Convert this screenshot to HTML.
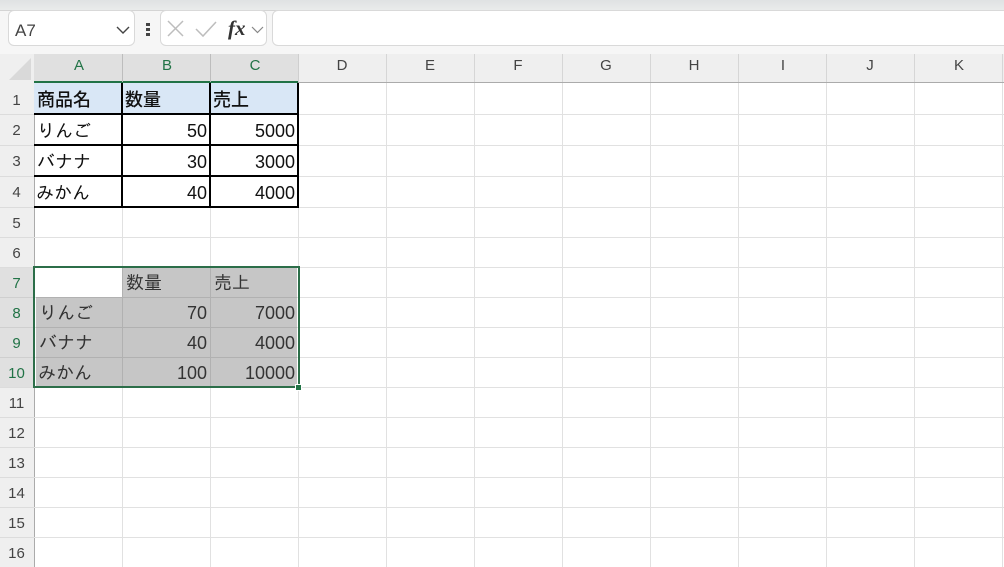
<!DOCTYPE html>
<html lang="ja">
<head>
<meta charset="utf-8">
<style>
html,body{margin:0;padding:0;width:1004px;height:567px;overflow:hidden;background:#fff}
body{position:relative;font-family:"Liberation Sans","Noto Sans CJK JP",sans-serif}
.a{position:absolute}
.box{position:absolute;box-sizing:border-box;background:#fff;border:1px solid #d9d9d9;border-radius:6px}
.ch,.rh{position:absolute;color:#444;font-size:15px;text-align:center}
.ch{top:56px;height:20px;line-height:20px;width:88px}
.rh{left:0;width:33px;height:20px;line-height:20px;font-size:15px}
.g{color:#217346}
.t{position:absolute;font-size:18px;color:#111;height:24px;line-height:24px;white-space:nowrap;font-family:"Liberation Sans","IPAGothic","Noto Sans CJK JP",sans-serif}
.b{font-family:"Liberation Sans","Noto Sans CJK JP",sans-serif;font-weight:500}
.r{text-align:right}
.s{color:#333}
.k{background:#000}
</style>
</head>
<body>
<div class="a" style="left:0;top:0;width:1004px;height:54px;background:#f6f6f6"></div>
<div class="a" style="left:0;top:0;width:1004px;height:10px;background:linear-gradient(#dfe2e3,#e9ebeb)"></div>
<div class="a" style="left:0;top:10px;width:1004px;height:1px;background:#d4d4d4"></div>

<div class="box" style="left:8px;top:10px;width:127px;height:36px"></div>
<div class="a" style="left:15px;top:20px;font-size:17px;line-height:22px;color:#444">A7</div>
<svg class="a" style="left:115px;top:25px" width="16" height="10"><path d="M2 2 L8 8 L14 2" fill="none" stroke="#444" stroke-width="1.4"/></svg>
<div class="a" style="left:146px;top:23px;width:4px;height:3px;background:#444"></div>
<div class="a" style="left:146px;top:28px;width:4px;height:3px;background:#444"></div>
<div class="a" style="left:146px;top:33px;width:4px;height:3px;background:#444"></div>

<div class="box" style="left:160px;top:10px;width:107px;height:36px"></div>
<svg class="a" style="left:166px;top:20px" width="22" height="18"><path d="M2 1 L17 16 M17 1 L2 16" fill="none" stroke="#bdbdbd" stroke-width="1.5"/></svg>
<svg class="a" style="left:194px;top:20px" width="24" height="18"><path d="M2 9 L9 16 L22 2" fill="none" stroke="#bdbdbd" stroke-width="1.5"/></svg>
<div class="a" style="left:228px;top:16px;font-family:'Liberation Serif',serif;font-style:italic;font-weight:bold;font-size:21px;line-height:24px;color:#333">fx</div>
<svg class="a" style="left:250px;top:25px" width="16" height="10"><path d="M2 2 L7.5 7.5 L13 2" fill="none" stroke="#888" stroke-width="1.2"/></svg>

<div class="box" style="left:272px;top:10px;width:740px;height:36px"></div>

<div class="a" style="left:0;top:54px;width:1004px;height:29px;background:#efefef"></div>
<div class="a" style="left:0;top:83px;width:34px;height:484px;background:#efefef"></div>
<div class="a" style="left:34px;top:54px;width:264px;height:28px;background:#e0e0e0"></div>
<svg class="a" style="left:8px;top:57px" width="24" height="24"><path d="M23 1 V23 H1 Z" fill="#d9d9d9"/></svg>

<div class="a" style="left:34px;top:82px;width:970px;height:1px;background:#ababab"></div>
<div class="a" style="left:34px;top:81px;width:264px;height:2px;background:#217346"></div>
<div class="a" style="left:34px;top:83px;width:1px;height:484px;background:#ababab"></div>

<!-- header column separators -->
<div class="a" style="left:122px;top:54px;width:1px;height:28px;background:#bdbdbd"></div>
<div class="a" style="left:210px;top:54px;width:1px;height:28px;background:#bdbdbd"></div>
<div class="a" style="left:298px;top:54px;width:1px;height:28px;background:#cfcfcf"></div>
<div class="a" style="left:386px;top:54px;width:1px;height:28px;background:#d6d6d6"></div>
<div class="a" style="left:474px;top:54px;width:1px;height:28px;background:#d6d6d6"></div>
<div class="a" style="left:562px;top:54px;width:1px;height:28px;background:#d6d6d6"></div>
<div class="a" style="left:650px;top:54px;width:1px;height:28px;background:#d6d6d6"></div>
<div class="a" style="left:738px;top:54px;width:1px;height:28px;background:#d6d6d6"></div>
<div class="a" style="left:826px;top:54px;width:1px;height:28px;background:#d6d6d6"></div>
<div class="a" style="left:914px;top:54px;width:1px;height:28px;background:#d6d6d6"></div>
<div class="a" style="left:1002px;top:54px;width:1px;height:28px;background:#d6d6d6"></div>

<!-- grid vertical -->
<div class="a" style="left:122px;top:83px;width:1px;height:484px;background:#e1e1e1"></div>
<div class="a" style="left:210px;top:83px;width:1px;height:484px;background:#e1e1e1"></div>
<div class="a" style="left:298px;top:83px;width:1px;height:484px;background:#e1e1e1"></div>
<div class="a" style="left:386px;top:83px;width:1px;height:484px;background:#e1e1e1"></div>
<div class="a" style="left:474px;top:83px;width:1px;height:484px;background:#e1e1e1"></div>
<div class="a" style="left:562px;top:83px;width:1px;height:484px;background:#e1e1e1"></div>
<div class="a" style="left:650px;top:83px;width:1px;height:484px;background:#e1e1e1"></div>
<div class="a" style="left:738px;top:83px;width:1px;height:484px;background:#e1e1e1"></div>
<div class="a" style="left:826px;top:83px;width:1px;height:484px;background:#e1e1e1"></div>
<div class="a" style="left:914px;top:83px;width:1px;height:484px;background:#e1e1e1"></div>
<div class="a" style="left:1002px;top:83px;width:1px;height:484px;background:#e1e1e1"></div>

<!-- grid horizontal -->
<div class="a" style="left:34px;top:114px;width:970px;height:1px;background:#e1e1e1"></div>
<div class="a" style="left:34px;top:145px;width:970px;height:1px;background:#e1e1e1"></div>
<div class="a" style="left:34px;top:176px;width:970px;height:1px;background:#e1e1e1"></div>
<div class="a" style="left:34px;top:207px;width:970px;height:1px;background:#e1e1e1"></div>
<div class="a" style="left:34px;top:237px;width:970px;height:1px;background:#e1e1e1"></div>
<div class="a" style="left:34px;top:267px;width:970px;height:1px;background:#e1e1e1"></div>
<div class="a" style="left:34px;top:297px;width:970px;height:1px;background:#e1e1e1"></div>
<div class="a" style="left:34px;top:327px;width:970px;height:1px;background:#e1e1e1"></div>
<div class="a" style="left:34px;top:357px;width:970px;height:1px;background:#e1e1e1"></div>
<div class="a" style="left:34px;top:387px;width:970px;height:1px;background:#e1e1e1"></div>
<div class="a" style="left:34px;top:417px;width:970px;height:1px;background:#e1e1e1"></div>
<div class="a" style="left:34px;top:447px;width:970px;height:1px;background:#e1e1e1"></div>
<div class="a" style="left:34px;top:477px;width:970px;height:1px;background:#e1e1e1"></div>
<div class="a" style="left:34px;top:507px;width:970px;height:1px;background:#e1e1e1"></div>
<div class="a" style="left:34px;top:537px;width:970px;height:1px;background:#e1e1e1"></div>

<!-- row header ticks -->
<div class="a" style="left:0;top:114px;width:34px;height:1px;background:#dcdcdc"></div>
<div class="a" style="left:0;top:145px;width:34px;height:1px;background:#dcdcdc"></div>
<div class="a" style="left:0;top:176px;width:34px;height:1px;background:#dcdcdc"></div>
<div class="a" style="left:0;top:207px;width:34px;height:1px;background:#dcdcdc"></div>
<div class="a" style="left:0;top:237px;width:34px;height:1px;background:#dcdcdc"></div>
<div class="a" style="left:0;top:267px;width:34px;height:1px;background:#dcdcdc"></div>
<div class="a" style="left:0;top:297px;width:34px;height:1px;background:#dcdcdc"></div>
<div class="a" style="left:0;top:327px;width:34px;height:1px;background:#dcdcdc"></div>
<div class="a" style="left:0;top:357px;width:34px;height:1px;background:#dcdcdc"></div>
<div class="a" style="left:0;top:387px;width:34px;height:1px;background:#dcdcdc"></div>
<div class="a" style="left:0;top:417px;width:34px;height:1px;background:#dcdcdc"></div>
<div class="a" style="left:0;top:447px;width:34px;height:1px;background:#dcdcdc"></div>
<div class="a" style="left:0;top:477px;width:34px;height:1px;background:#dcdcdc"></div>
<div class="a" style="left:0;top:507px;width:34px;height:1px;background:#dcdcdc"></div>
<div class="a" style="left:0;top:537px;width:34px;height:1px;background:#dcdcdc"></div>

<!-- selected row header highlight -->
<div class="a" style="left:0;top:268px;width:34px;height:119px;background:#e0e0e0"></div>
<div class="a" style="left:0;top:297px;width:34px;height:1px;background:#cfcfcf"></div>
<div class="a" style="left:0;top:327px;width:34px;height:1px;background:#cfcfcf"></div>
<div class="a" style="left:0;top:357px;width:34px;height:1px;background:#cfcfcf"></div>

<!-- column headers -->
<div class="ch g" style="left:35px">A</div>
<div class="ch g" style="left:123px">B</div>
<div class="ch g" style="left:211px">C</div>
<div class="ch" style="left:298px">D</div>
<div class="ch" style="left:386px">E</div>
<div class="ch" style="left:474px">F</div>
<div class="ch" style="left:562px">G</div>
<div class="ch" style="left:650px">H</div>
<div class="ch" style="left:739px">I</div>
<div class="ch" style="left:826px">J</div>
<div class="ch" style="left:915px">K</div>

<!-- row headers -->
<div class="rh" style="top:91px">1</div>
<div class="rh" style="top:121px">2</div>
<div class="rh" style="top:152px">3</div>
<div class="rh" style="top:183px">4</div>
<div class="rh" style="top:214px">5</div>
<div class="rh" style="top:244px">6</div>
<div class="rh g" style="top:274px">7</div>
<div class="rh g" style="top:304px">8</div>
<div class="rh g" style="top:334px">9</div>
<div class="rh g" style="top:364px">10</div>
<div class="rh" style="top:394px">11</div>
<div class="rh" style="top:424px">12</div>
<div class="rh" style="top:454px">13</div>
<div class="rh" style="top:484px">14</div>
<div class="rh" style="top:514px">15</div>
<div class="rh" style="top:544px">16</div>

<!-- top table fill -->
<div class="a" style="left:34px;top:83px;width:264px;height:31px;background:#d9e7f6"></div>

<!-- top table borders -->
<div class="a k" style="left:34px;top:113px;width:265px;height:2px"></div>
<div class="a k" style="left:34px;top:144px;width:265px;height:2px"></div>
<div class="a k" style="left:34px;top:175px;width:265px;height:2px"></div>
<div class="a k" style="left:34px;top:206px;width:265px;height:2px"></div>
<div class="a k" style="left:121px;top:83px;width:2px;height:125px"></div>
<div class="a k" style="left:209px;top:83px;width:2px;height:125px"></div>
<div class="a k" style="left:297px;top:83px;width:2px;height:125px"></div>

<!-- top table text -->
<div class="t b" style="left:37px;top:88px">商品名</div>
<div class="t b" style="left:125px;top:88px">数量</div>
<div class="t b" style="left:213px;top:88px">売上</div>
<div class="t" style="left:37px;top:119px">りんご</div>
<div class="t" style="left:37px;top:150px">バナナ</div>
<div class="t" style="left:36px;top:181px">みかん</div>
<div class="t r" style="left:123px;width:84px;top:119px">50</div>
<div class="t r" style="left:211px;width:84px;top:119px">5000</div>
<div class="t r" style="left:123px;width:84px;top:150px">30</div>
<div class="t r" style="left:211px;width:84px;top:150px">3000</div>
<div class="t r" style="left:123px;width:84px;top:181px">40</div>
<div class="t r" style="left:211px;width:84px;top:181px">4000</div>

<!-- selected range fill -->
<div class="a" style="left:123px;top:268px;width:174px;height:29px;background:#c6c6c6"></div>
<div class="a" style="left:36px;top:298px;width:261px;height:29px;background:#c6c6c6"></div>
<div class="a" style="left:36px;top:328px;width:261px;height:29px;background:#c6c6c6"></div>
<div class="a" style="left:36px;top:358px;width:261px;height:28px;background:#c6c6c6"></div>
<div class="a" style="left:36px;top:297px;width:261px;height:1px;background:#b1b1b1"></div>
<div class="a" style="left:36px;top:327px;width:261px;height:1px;background:#b1b1b1"></div>
<div class="a" style="left:36px;top:357px;width:261px;height:1px;background:#b1b1b1"></div>
<div class="a" style="left:122px;top:268px;width:1px;height:118px;background:#b1b1b1"></div>
<div class="a" style="left:210px;top:268px;width:1px;height:118px;background:#b1b1b1"></div>

<!-- selection border -->
<div class="a" style="left:33px;top:266px;width:267px;height:122px;box-sizing:border-box;border:2px solid #2c6e49"></div>
<div class="a" style="left:295px;top:384px;width:5px;height:5px;background:#217346;border:1px solid #fff;box-sizing:content-box"></div>

<!-- selected text -->
<div class="t s" style="left:126px;top:271px">数量</div>
<div class="t s" style="left:214px;top:271px">売上</div>
<div class="t s" style="left:39px;top:301px">りんご</div>
<div class="t s" style="left:39px;top:331px">バナナ</div>
<div class="t s" style="left:38px;top:361px">みかん</div>
<div class="t s r" style="left:123px;width:84px;top:301px">70</div>
<div class="t s r" style="left:211px;width:84px;top:301px">7000</div>
<div class="t s r" style="left:123px;width:84px;top:331px">40</div>
<div class="t s r" style="left:211px;width:84px;top:331px">4000</div>
<div class="t s r" style="left:123px;width:84px;top:361px">100</div>
<div class="t s r" style="left:211px;width:84px;top:361px">10000</div>
</body>
</html>
